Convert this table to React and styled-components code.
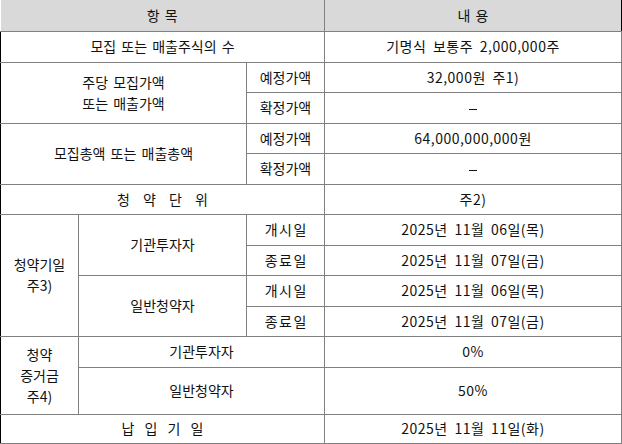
import styled, { createGlobalStyle } from 'styled-components';

const GlobalStyle = createGlobalStyle`
  html, body {
    margin: 0;
    padding: 0;
    background: #fff;
  }
  body {
    font-family: 'Noto Sans CJK KR', 'Noto Sans', sans-serif;
    color: #000;
  }
`;

const Table = styled.table`
  width: 621px;
  table-layout: fixed;
  border-collapse: collapse;
  font-size: 14px;
  color: #111;
  border-right: 1px solid #000;
  border-bottom: 1px solid #000;
`;

const Row = styled.tr`
  height: ${(p) => p.$h}px;
`;

const HeadCell = styled.th`
  background: #d9d9d9;
  font-weight: 400;
  padding: 0;
  text-align: center;
  word-spacing: 2px;
  border-bottom: 1px solid #808080;
  border-left: 1px solid #808080;
  &:first-child {
    border-left: none;
  }
`;

const Cell = styled.td`
  padding: 0;
  text-align: center;
  vertical-align: middle;
  line-height: 21px;
  border: 1px solid #808080;
  border-left: ${(p) => (p.$edge ? '1px solid #000' : '1px solid #808080')};
  word-spacing: ${(p) => (p.$wide || 0) + 2}px;
  letter-spacing: ${(p) => p.$track || 0}px;
  text-indent: ${(p) => p.$track || 0}px;
  white-space: nowrap;
`;

const ValueCell = styled(Cell)`
  letter-spacing: 0.5px;
  word-spacing: 3px;
`;

const Line = styled.div`
  line-height: 21px;
`;

const Dash = styled.span`
  display: inline-block;
  width: 8px;
  height: 1px;
  background: #111;
  vertical-align: middle;
`;

const dates = [
  { who: '기관투자자', start: '2025년 11월 06일(목)', end: '2025년 11월 07일(금)' },
  { who: '일반청약자', start: '2025년 11월 06일(목)', end: '2025년 11월 07일(금)' },
];

export default function App() {
  return (
    <>
      <GlobalStyle />
      <Table>
        <colgroup>
          <col style={{ width: 78 }} />
          <col style={{ width: 168 }} />
          <col style={{ width: 78 }} />
          <col style={{ width: 297 }} />
        </colgroup>
        <thead>
          <Row $h={31}>
            <HeadCell colSpan={3}>항 목</HeadCell>
            <HeadCell>내 용</HeadCell>
          </Row>
        </thead>
        <tbody>
          <Row $h={31}>
            <Cell $edge colSpan={3}>모집 또는 매출주식의 수</Cell>
            <ValueCell>기명식 보통주 2,000,000주</ValueCell>
          </Row>
          <Row $h={30}>
            <Cell $edge colSpan={2} rowSpan={2}>
              <Line>주당 모집가액</Line>
              <Line>또는 매출가액</Line>
            </Cell>
            <Cell>예정가액</Cell>
            <ValueCell>32,000원 주1)</ValueCell>
          </Row>
          <Row $h={31}>
            <Cell>확정가액</Cell>
            <ValueCell><Dash /></ValueCell>
          </Row>
          <Row $h={30}>
            <Cell $edge colSpan={2} rowSpan={2}>모집총액 또는 매출총액</Cell>
            <Cell>예정가액</Cell>
            <ValueCell>64,000,000,000원</ValueCell>
          </Row>
          <Row $h={31}>
            <Cell>확정가액</Cell>
            <ValueCell><Dash /></ValueCell>
          </Row>
          <Row $h={30}>
            <Cell $edge colSpan={3} $wide={8}>청 약 단 위</Cell>
            <ValueCell>주2)</ValueCell>
          </Row>
          {dates.map((d, i) => (
            <>
              <Row $h={31} key={d.who + 'a'}>
                {i === 0 && (
                  <Cell $edge rowSpan={4}>
                    <Line>청약기일</Line>
                    <Line>주3)</Line>
                  </Cell>
                )}
                <Cell rowSpan={2}>{d.who}</Cell>
                <Cell $track={1.5}>개시일</Cell>
                <ValueCell>{d.start}</ValueCell>
              </Row>
              <Row $h={30} key={d.who + 'b'}>
                <Cell $track={1.5}>종료일</Cell>
                <ValueCell>{d.end}</ValueCell>
              </Row>
            </>
          ))}
          <Row $h={31}>
            <Cell $edge rowSpan={2}>
              <Line>청약</Line>
              <Line>증거금</Line>
              <Line>주4)</Line>
            </Cell>
            <Cell colSpan={2}>기관투자자</Cell>
            <ValueCell>0%</ValueCell>
          </Row>
          <Row $h={47}>
            <Cell colSpan={2}>일반청약자</Cell>
            <ValueCell>50%</ValueCell>
          </Row>
          <Row $h={29}>
            <Cell $edge colSpan={3} $wide={5}>납 입 기 일</Cell>
            <ValueCell>2025년 11월 11일(화)</ValueCell>
          </Row>
        </tbody>
      </Table>
    </>
  );
}
